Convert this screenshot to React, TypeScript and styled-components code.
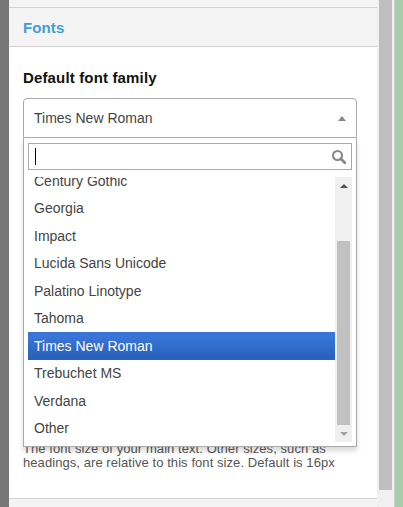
import React from "react";
import styled, { createGlobalStyle } from "styled-components";

const GlobalStyle = createGlobalStyle`
  html, body { margin: 0; padding: 0; }
  body {
    font-family: "Liberation Sans", Arial, sans-serif;
    background: #fff;
    overflow: hidden;
  }
  * { box-sizing: border-box; }
`;

const Page = styled.div`
  display: flex;
  width: 403px;
  height: 507px;
  overflow: hidden;
`;

const LeftStrip = styled.div`
  width: 9px;
  flex-shrink: 0;
  background: #777777;
`;

const Panel = styled.div`
  width: 368px;
  flex-shrink: 0;
  display: flex;
  flex-direction: column;
  background: #fff;
`;

const PrevSection = styled.div`
  height: 8px;
  flex-shrink: 0;
  background: #f4f4f4;
  border-bottom: 1px solid #d3d3d3;
`;

const SectionHeader = styled.div`
  height: 39px;
  flex-shrink: 0;
  display: flex;
  align-items: center;
  padding-left: 14px;
  background: #f4f4f4;
  border-bottom: 1px solid #d3d3d3;
  color: #449bd8;
  font-size: 15px;
  font-weight: bold;
  letter-spacing: 0.1px;
`;

const Body = styled.div`
  display: flex;
  flex-direction: column;
  gap: 28.5px;
  padding: 22px 20px 28.5px 14px;
  border-bottom: 1px solid #d3d3d3;
  flex-shrink: 0;
`;

const NextSection = styled.div`
  flex: 1;
  background: #f4f4f4;
`;

const Field = styled.div`
  display: flex;
  flex-direction: column;
`;

const Label = styled.div`
  font-size: 15px;
  font-weight: bold;
  line-height: 18px;
  color: #111;
  margin-bottom: 11px;
  letter-spacing: 0.15px;
`;

const Help = styled.div`
  margin-top: 11px;
  font-size: 13px;
  line-height: 14px;
  color: #555;
  letter-spacing: 0.07px;
`;

const TextBox = styled.div`
  height: 40px;
  border: 1px solid #aaa;
  border-radius: 4px;
  background: #fff;
`;

const SelectWrap = styled.div`
  position: relative;
  z-index: 5;
`;

const Select = styled.div`
  height: 40px;
  display: flex;
  align-items: center;
  justify-content: space-between;
  padding: 0 10px 0 10px;
  border: 1px solid #aaa;
  border-radius: 4px 4px 0 0;
  background: #fff;
  color: #444;
  font-size: 14px;
`;

const Dropdown = styled.div`
  position: absolute;
  top: 100%;
  left: 0;
  right: 0;
  padding: 5px 4px 4px;
  background: #fff;
  border: 1px solid #aaa;
  border-top: 0;
  box-shadow: 0 4px 5px rgba(0, 0, 0, 0.15);
`;

const SearchBox = styled.div`
  height: 27px;
  display: flex;
  align-items: center;
  padding: 0 4px 0 6px;
  border: 1px solid #aaa;
  background: #fff;
`;

const Caret = styled.span`
  width: 1px;
  height: 17px;
  background: #000;
`;

const SearchIcon = styled.svg`
  margin-left: auto;
  width: 16px;
  height: 16px;
`;

const ListRow = styled.div`
  display: flex;
  height: 265px;
  margin-top: 7px;
`;

const Options = styled.div`
  flex: 1;
  display: flex;
  flex-direction: column;
  justify-content: flex-end;
  overflow: hidden;
`;

const Option = styled.div<{ $active?: boolean }>`
  height: 27.5px;
  flex-shrink: 0;
  display: flex;
  align-items: center;
  padding: 0 6px;
  font-size: 14px;
  color: ${(p) => (p.$active ? "#fff" : "#444")};
  background: ${(p) =>
    p.$active ? "linear-gradient(#3875d7 20%, #2a62bc 90%)" : "transparent"};
`;

const ListScrollbar = styled.div`
  width: 17px;
  flex-shrink: 0;
  display: flex;
  flex-direction: column;
  background: #f0f0f0;
`;

const ScrollButton = styled.div`
  height: 17px;
  flex-shrink: 0;
  display: flex;
  align-items: center;
  justify-content: center;
`;

const Arrow = styled.span<{ $down?: boolean; $dim?: boolean }>`
  width: 0;
  height: 0;
  border-left: 4px solid transparent;
  border-right: 4px solid transparent;
  ${(p) =>
    p.$down
      ? `border-top: 4px solid ${p.$dim ? "#a3a3a3" : "#505050"};`
      : `border-bottom: 4px solid ${p.$dim ? "#a3a3a3" : "#505050"};`}
`;

const ScrollTrack = styled.div`
  flex: 1;
  display: flex;
  flex-direction: column;
  justify-content: flex-end;
  padding: 0 2px;
`;

const ScrollThumb = styled.div`
  height: 184px;
  background: #c1c1c1;
`;

const SelectArrow = styled.span`
  width: 0;
  height: 0;
  border-left: 4px solid transparent;
  border-right: 4px solid transparent;
  border-bottom: 5px solid #888;
`;

const PageScroll = styled.div`
  width: 17px;
  flex-shrink: 0;
  padding: 0 2px;
  background: #f0f0f0;
`;

const PageThumb = styled.div`
  height: 490px;
  background: #bfbfbf;
`;

const Divider = styled.div`
  width: 1px;
  flex-shrink: 0;
  background: #c9d6c9;
`;

const GreenPane = styled.div`
  flex: 1;
  background: #a9cda9;
`;

const fonts = [
  "Arial",
  "Arial Black",
  "Century Gothic",
  "Georgia",
  "Impact",
  "Lucida Sans Unicode",
  "Palatino Linotype",
  "Tahoma",
  "Times New Roman",
  "Trebuchet MS",
  "Verdana",
  "Other",
];

export default function App() {
  const selected = "Times New Roman";
  return (
    <>
      <GlobalStyle />
      <Page>
        <LeftStrip />
        <Panel>
          <PrevSection />
          <SectionHeader>Fonts</SectionHeader>
          <Body>
            <Field>
              <Label>Default font family</Label>
              <SelectWrap>
                <Select>
                  <span>{selected}</span>
                  <SelectArrow />
                </Select>
                <Dropdown>
                  <SearchBox>
                    <Caret />
                    <SearchIcon viewBox="0 0 16 16">
                      <circle cx="6.5" cy="6.5" r="4.5" fill="none" stroke="#888" strokeWidth="2.1" />
                      <line x1="9.8" y1="9.8" x2="13.8" y2="13.8" stroke="#888" strokeWidth="2.8" strokeLinecap="round" />
                    </SearchIcon>
                  </SearchBox>
                  <ListRow>
                    <Options>
                      {fonts.map((f) => (
                        <Option key={f} $active={f === selected}>
                          {f}
                        </Option>
                      ))}
                    </Options>
                    <ListScrollbar>
                      <ScrollButton>
                        <Arrow />
                      </ScrollButton>
                      <ScrollTrack>
                        <ScrollThumb />
                      </ScrollTrack>
                      <ScrollButton>
                        <Arrow $down $dim />
                      </ScrollButton>
                    </ListScrollbar>
                  </ListRow>
                </Dropdown>
              </SelectWrap>
            </Field>
            <Field>
              <Label>Custom font family</Label>
              <TextBox />
            </Field>
            <Field>
              <Label>Heading font family</Label>
              <TextBox />
            </Field>
            <Field>
              <Label>Default font size</Label>
              <TextBox />
              <Help>
                The font size of your main text. Other sizes, such as headings, are
                relative to this font size. Default is 16px
              </Help>
            </Field>
          </Body>
          <NextSection />
        </Panel>
        <PageScroll>
          <PageThumb />
        </PageScroll>
        <Divider />
        <GreenPane />
      </Page>
    </>
  );
}
